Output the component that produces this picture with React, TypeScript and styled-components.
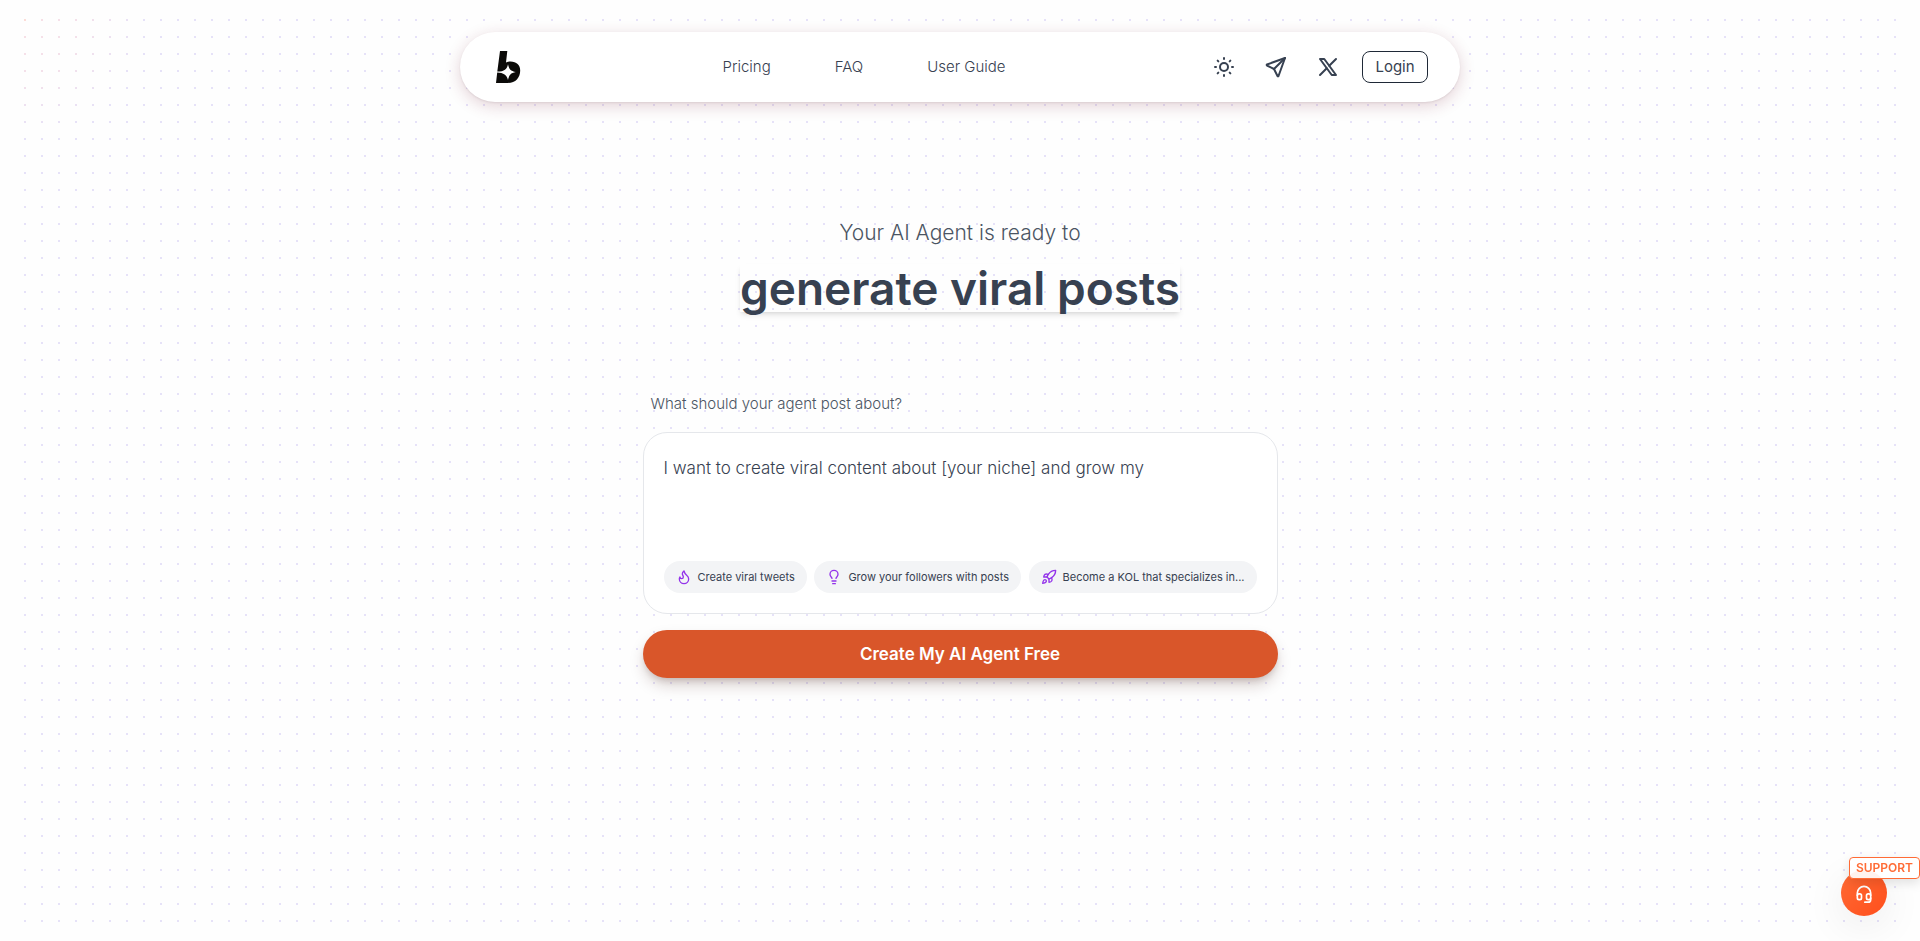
import React from 'react';
import styled, { createGlobalStyle } from 'styled-components';
import { Flame, Lightbulb, Rocket, SunMedium } from 'lucide-react';

const GlobalStyle = createGlobalStyle`
  *, *::before, *::after { box-sizing: border-box; }
  body {
    margin: 0;
    background: #fefefe;
    color: #374151;
    font-family: Inter, "Liberation Sans", sans-serif;
    font-weight: 300;
    -webkit-font-smoothing: antialiased;
  }
  button, textarea { font: inherit; color: inherit; }
  button { cursor: pointer; }
`;

const Page = styled.div`
  position: relative;
  min-height: 100vh;
  padding: 32px 24px;
  overflow: hidden;
`;

/* Dot grid: a tinted wash seen through a repeating 2px mask. */
const DotGrid = styled.div`
  position: absolute;
  inset: 11px 17px 12px 16px;
  background: radial-gradient(circle at 8px 8px, #fcdcd6 0, #f6e0e8 20px, #f3e0ea 60px, #e6e2f8 120px);
  mask-image:
    linear-gradient(to right, transparent 8px, #000 8px, #000 10px, transparent 10px),
    linear-gradient(to bottom, transparent 8px, #000 8px, #000 10px, transparent 10px);
  mask-size: 17px 17px;
  mask-composite: intersect;
  pointer-events: none;
`;

const Header = styled.header`
  position: relative;
  display: flex;
  align-items: center;
  justify-content: space-between;
  max-width: 1000px;
  height: 70px;
  margin: 0 auto;
  padding: 0 32px;
  border-radius: 35px;
  background: #fff;
  box-shadow: 0 4px 16px rgba(120, 30, 55, 0.2), 0 1px 2px rgba(0, 0, 0, 0.08);
`;

const Logo = styled.a`
  display: flex;
  color: #0b0a08;
`;

const Nav = styled.nav`
  display: flex;
  gap: 64px;
`;

const NavLink = styled.a`
  color: #374151;
  font-size: 15px;
  line-height: 24px;
  text-decoration: none;
`;

const Actions = styled.div`
  display: flex;
  align-items: center;
  gap: 14px;
`;

const IconGroup = styled.div`
  display: flex;
  gap: 12px;
`;

const IconButton = styled.button`
  display: flex;
  align-items: center;
  justify-content: center;
  width: 40px;
  height: 40px;
  padding: 0;
  border: 0;
  background: none;
`;

const LoginButton = styled.button`
  min-width: 66px;
  height: 32px;
  padding: 0 12px;
  border: 1px solid #1f2937;
  border-radius: 8px;
  background: #fff;
  font-size: 15px;
  font-weight: 400;
  line-height: 24px;
`;

const Main = styled.main`
  position: relative;
  display: flex;
  flex-direction: column;
  max-width: 635px;
  margin: 114px auto 0;
`;

const Title = styled.h1`
  display: flex;
  flex-direction: column;
  align-items: center;
  gap: 14px;
  margin: 0;
  font-weight: 300;
`;

const Lead = styled.span`
  color: #4b5563;
  font-size: 21px;
  line-height: 34px;
`;

const Highlight = styled.span`
  font-size: 46px;
  font-weight: 600;
  line-height: 48px;
  box-shadow: 0 4px 6px -1px rgba(0, 0, 0, 0.1), 0 2px 4px -2px rgba(0, 0, 0, 0.1);
`;

const Form = styled.form`
  display: flex;
  flex-direction: column;
  gap: 16px;
  margin-top: 80px;
`;

const Label = styled.label`
  padding: 0 8px;
  color: #4b5563;
  font-size: 15px;
  line-height: 24px;
`;

const Card = styled.div`
  display: flex;
  flex-direction: column;
  gap: 12px;
  padding: 20px;
  border: 1px solid #e5e7eb;
  border-radius: 24px;
  background: #fff;
`;

const Prompt = styled.textarea`
  display: block;
  width: 100%;
  height: 96px;
  padding: 0;
  border: 0;
  outline: 0;
  resize: none;
  background: transparent;
  font-size: 17px;
  line-height: 30px;
`;

const Chips = styled.div`
  display: flex;
  flex-wrap: wrap;
  justify-content: space-between;
  gap: 6px;
`;

const Chip = styled.button`
  display: flex;
  align-items: center;
  gap: 6px;
  height: 32px;
  padding: 0 12px;
  border: 0;
  border-radius: 16px;
  background: #f3f4f6;
  font-size: 11px;
  font-weight: 400;
  line-height: 16px;
  white-space: nowrap;

  svg { color: #9333ea; }
`;

const SubmitButton = styled.button`
  height: 48px;
  border: 0;
  border-radius: 24px;
  background: #d9562a;
  color: #fff;
  font-size: 17px;
  font-weight: 600;
  line-height: 28px;
  box-shadow: 0 8px 16px -2px rgba(60, 20, 10, 0.22), 0 4px 6px -2px rgba(60, 20, 10, 0.16);
`;

const SupportButton = styled.button`
  position: fixed;
  right: 33px;
  bottom: 25px;
  display: flex;
  align-items: center;
  justify-content: center;
  width: 46px;
  height: 46px;
  padding: 0;
  border: 0;
  border-radius: 50%;
  background: linear-gradient(135deg, #ff6b35, #ff4f1c);
  color: #fff;
  box-shadow: 0 10px 40px rgba(0, 0, 0, 0.08);
`;

const SupportBadge = styled.span`
  position: absolute;
  right: -33px;
  bottom: 37px;
  height: 22px;
  padding: 0 6px;
  border: 1px solid #ff6b35;
  border-radius: 4px;
  background: rgba(255, 255, 255, 0.92);
  color: #ff6b35;
  font-size: 12px;
  font-weight: 600;
  line-height: 20px;
  box-shadow: 0 4px 12px rgba(0, 0, 0, 0.12);
`;

const strokeProps = {
  width: 24,
  height: 24,
  viewBox: '0 0 24 24',
  fill: 'none',
  stroke: 'currentColor',
  strokeWidth: 2,
  strokeLinecap: 'round' as const,
  strokeLinejoin: 'round' as const,
};

const SendIcon = () => (
  <svg {...strokeProps}>
    <path d="M10 14 21 3" />
    <path d="M21 3l-6.5 18a.55.55 0 0 1-1 0L10 14l-7-3.500a.55.55 0 0 1 0-1L21 3" />
  </svg>
);

const XIcon = () => (
  <svg {...strokeProps}>
    <path d="M4 4l11.733 16H20L8.267 4z" />
    <path d="M4 20l6.768-6.768m2.460-2.460L20 4" />
  </svg>
);

const HeadsetIcon = () => (
  <svg {...strokeProps} width={20} height={20}>
    <path d="M4 15v-3a8 8 0 0 1 16 0v3" />
    <path d="M4 15a2 2 0 0 1 2-2h1a2 2 0 0 1 2 2v3a2 2 0 0 1-2 2H6a2 2 0 0 1-2-2z" />
    <path d="M15 15a2 2 0 0 1 2-2h1a2 2 0 0 1 2 2v3a2 2 0 0 1-2 2h-1a2 2 0 0 1-2-2z" />
    <path d="M20 18v2a3 3 0 0 1-3 3h-4" />
  </svg>
);

const LogoMark = () => (
  <svg width="32" height="32" viewBox="0 0 32 32" fill="currentColor">
    <path
      fillRule="evenodd"
      d="M8 0H15.300L14 11.500C15.500 10.800 17 10.600 18.500 10.600C24.500 10.600 28.200 14.300 28.200 19.500C28.200 26.500 23.500 32 16 32H4L5.200 21.400C11.500 21.800 15 23.500 16 29C17 23.800 18.800 22 23.800 21C18.800 20 17 18.200 16 13.200C15 18.400 12.500 20.400 5.300 20.600Z"
    />
  </svg>
);

const navLinks = ['Pricing', 'FAQ', 'User Guide'];

const suggestions = [
  { icon: Flame, text: 'Create viral tweets' },
  { icon: Lightbulb, text: 'Grow your followers with posts' },
  { icon: Rocket, text: 'Become a KOL that specializes in...' },
];

export default function App() {
  return (
    <>
      <GlobalStyle />
      <Page>
        <DotGrid />
        <Header>
          <Logo href="#" aria-label="Home">
            <LogoMark />
          </Logo>
          <Nav>
            {navLinks.map((label) => (
              <NavLink key={label} href="#">
                {label}
              </NavLink>
            ))}
          </Nav>
          <Actions>
            <IconGroup>
              <IconButton aria-label="Toggle theme">
                <SunMedium size={24} />
              </IconButton>
              <IconButton aria-label="Telegram">
                <SendIcon />
              </IconButton>
              <IconButton aria-label="X">
                <XIcon />
              </IconButton>
            </IconGroup>
            <LoginButton>Login</LoginButton>
          </Actions>
        </Header>

        <Main>
          <Title>
            <Lead>Your AI Agent is ready to</Lead>
            <Highlight>generate viral posts</Highlight>
          </Title>
          <Form onSubmit={(event) => event.preventDefault()}>
            <Label htmlFor="prompt">What should your agent post about?</Label>
            <Card>
              <Prompt
                id="prompt"
                defaultValue="I want to create viral content about [your niche] and grow my"
              />
              <Chips>
                {suggestions.map(({ icon: Icon, text }) => (
                  <Chip key={text} type="button">
                    <Icon size={16} />
                    {text}
                  </Chip>
                ))}
              </Chips>
            </Card>
            <SubmitButton type="submit">Create My AI Agent Free</SubmitButton>
          </Form>
        </Main>

        <SupportButton aria-label="Support">
          <HeadsetIcon />
          <SupportBadge>SUPPORT</SupportBadge>
        </SupportButton>
      </Page>
    </>
  );
}
